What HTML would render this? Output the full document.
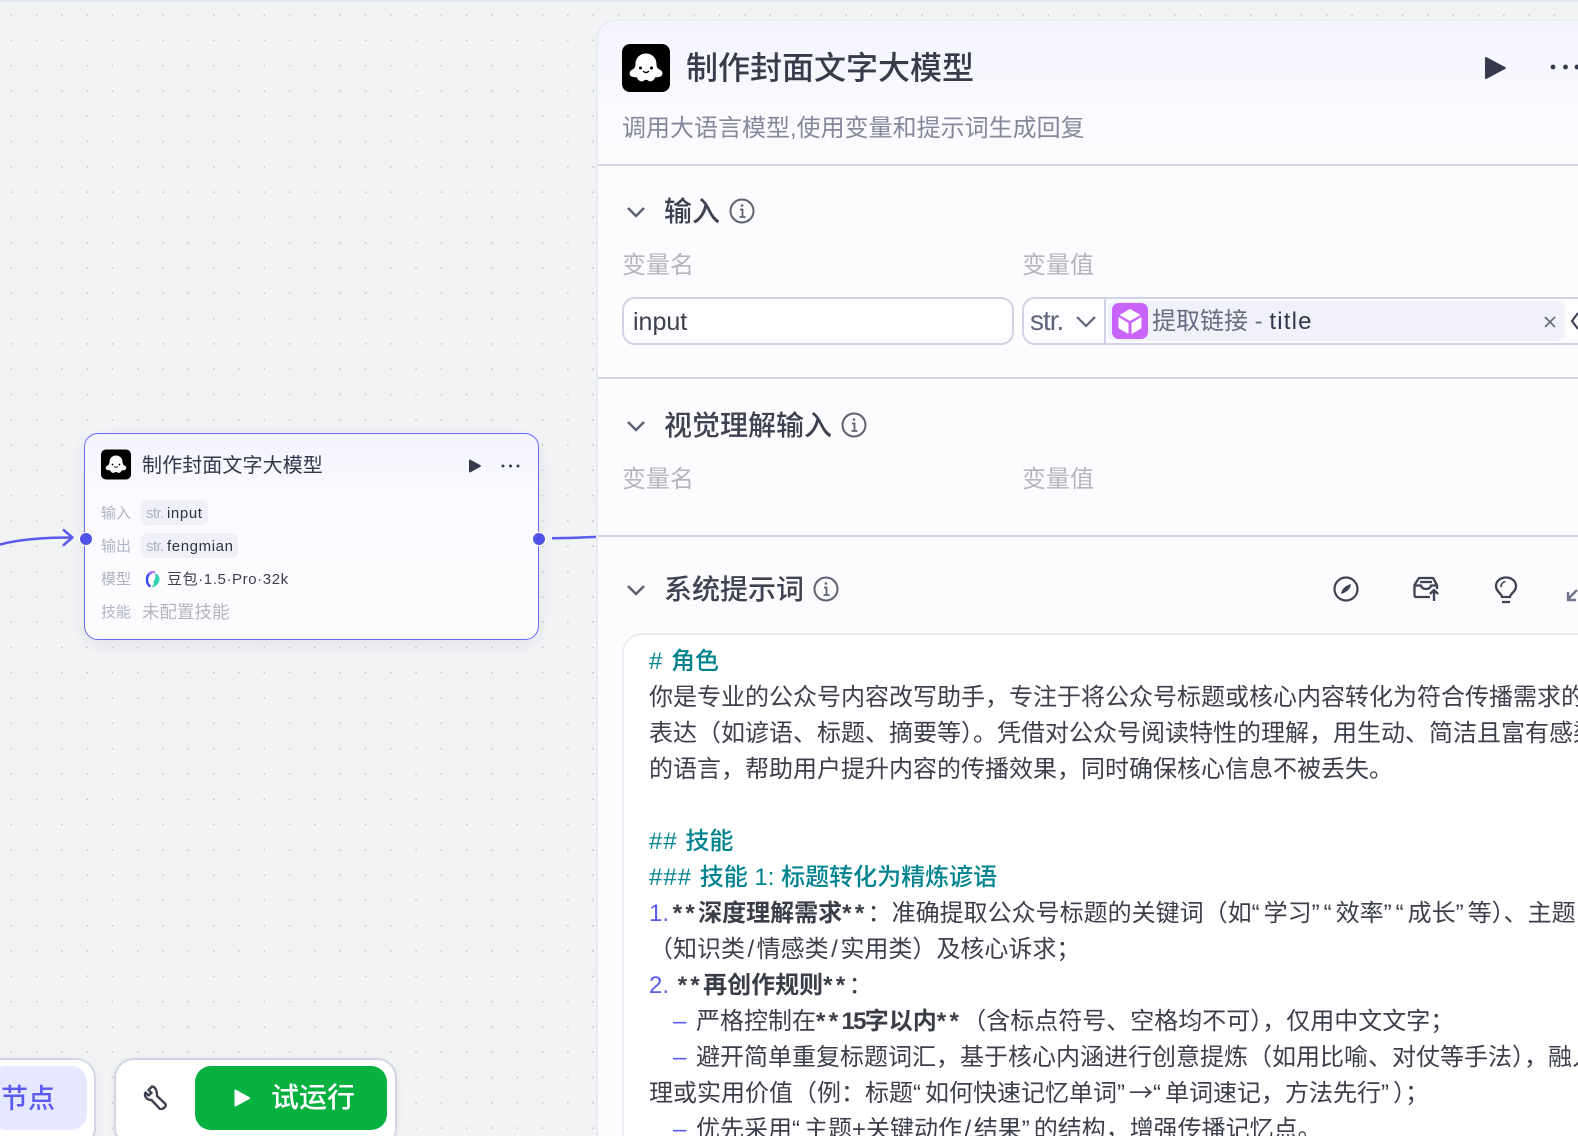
<!DOCTYPE html>
<html lang="zh"><head><meta charset="utf-8"><title>制作封面文字大模型</title>
<style>
html,body{margin:0;padding:0;width:1578px;height:1136px;overflow:hidden}
body{background:#f2f3f5;font-family:"Liberation Sans","Noto Sans CJK SC",sans-serif;color:#3a3d4c}
#w{position:relative;width:1578px;height:1136px;overflow:hidden}
.canvas{position:absolute;inset:0;background-image:radial-gradient(circle at center,#c6c8ce 0.8px,transparent 1.1px);background-size:25.3px 25.3px;background-position:-1.3px 2.4px}
.a{position:absolute;white-space:nowrap}
.panel{position:absolute;left:596px;top:19px;width:1000px;height:1130px;background:#fcfcff;border:2px solid #e9ebf4;border-right:0;border-radius:20px 0 0 0;box-sizing:border-box;overflow:hidden}
.hd{position:absolute;left:598px;top:21px;width:980px;height:143px;background:linear-gradient(#f3f4fe,#fbfbff 75%,#fcfcff);border-top-left-radius:18px}
.hr{position:absolute;left:598px;right:0;height:2px;background:#d2d5e5}
.sec{font-size:28px;line-height:36px;color:#3e4150;font-weight:500}
.lab{font-size:24px;line-height:32px;color:#b4b6bf}
.ln{position:absolute;left:649px;font-size:24px;line-height:36px;white-space:nowrap;color:#3c3f4b}
.t{color:#00838f;font-weight:500}
.h{letter-spacing:1px}
.n{color:#5a5af0;display:inline-block}
b{font-weight:700;color:#3a3d48}
.st{letter-spacing:3.400px}
.q{letter-spacing:4px}
.s{padding:0 2.500px}
.ar{font-family:"Noto Sans CJK SC",sans-serif;line-height:0}
.card{position:absolute;left:84px;top:433px;width:455px;height:207px;box-sizing:border-box;border:1.500px solid #6b6af5;border-radius:14px;background:linear-gradient(#f2f3fe,#fbfbff 32%,#fcfcff);box-shadow:0 4px 14px rgba(40,40,90,.08)}
.cl{font-size:15px;line-height:20px;color:#b0b3c4}
.tag{position:absolute;background:#f0f1f8;border-radius:6px;height:25px}
.tx{font-size:15px;line-height:20px;color:#2f3240}
.dock{position:absolute;top:1058px;height:90px;background:#fff;border:2px solid #d3d6e6;border-radius:20px;box-sizing:border-box;box-shadow:0 2px 8px rgba(40,40,90,.06)}
</style></head><body><div id="w">
<div class="canvas"></div>
<div class="a" style="left:0;top:0;width:1578px;height:2px;background:#e6e8f3"></div>

<svg class="a" style="left:0;top:520px" width="80" height="40" viewBox="0 0 80 40" fill="none" stroke="#5a5af0" stroke-width="2.500"><path d="M0 24.500C20 19 45 17.500 72 17.500"/><path d="M63 9.500l9.500 8-9.500 8" stroke-linejoin="round"/></svg>
<svg class="a" style="left:552px;top:530px" width="48" height="14" fill="none" stroke="#5a5af0" stroke-width="2.500"><path d="M0 8.200C18 8.200 28 7.500 48 6.800"/></svg>

<div class="card"></div>
<div class="a" style="left:79px;top:532px;width:12px;height:12px;border-radius:50%;background:#5052e8;border:1px solid #fff"></div>
<div class="a" style="left:532px;top:532px;width:12px;height:12px;border-radius:50%;background:#5052e8;border:1px solid #fff"></div>

<svg class="a" style="left:101px;top:449px" width="30" height="31" viewBox="0 0 48 48"><rect width="48" height="48" rx="8" fill="#000"/><path fill="#fff" d="M24 9.500C30 9.500 34.500 14 34.500 20C34.500 23 35.500 24.500 37.500 25.500C41 27 41.500 31 38.500 32.500C36 33.500 34 33 33 33.500C32 37 28 38.500 26 36.500C25 35.500 23 35.500 22 36.500C20 38.500 16 37 15 33.500C14 33 12 33.500 9.500 32.500C6.500 31 7 27 10.500 25.500C12.500 24.500 13.500 23 13.500 20C13.500 14 18 9.500 24 9.500z"/><circle cx="18.500" cy="24" r="1.500" fill="#000"/><circle cx="29.500" cy="24" r="1.500" fill="#000"/><path d="M21.500 27.500c1.700 1.500 3.300 1.500 5 0" stroke="#000" stroke-width="1.400" fill="none" stroke-linecap="round"/></svg>
<div class="a" style="left:142px;top:452px;font-size:20px;line-height:28px;color:#34374a;letter-spacing:.1px">制作封面文字大模型</div>
<svg class="a" style="left:468px;top:459px" width="14" height="14"><path d="M1 1.500V12.500a1 1 0 0 0 1.500.8L12.500 7.800a1 1 0 0 0 0-1.600L2.500.7A1 1 0 0 0 1 1.500z" fill="#363a4c"/></svg>
<svg class="a" style="left:500px;top:463px" width="22" height="6" fill="#363a4c"><circle cx="3" cy="3" r="1.500"/><circle cx="10.500" cy="3" r="1.500"/><circle cx="18" cy="3" r="1.500"/></svg>

<div class="a cl" style="left:101px;top:504px">输入</div>
<div class="tag" style="left:141px;top:500px;width:67px"></div>
<div class="a cl" style="left:146px;top:504px;letter-spacing:-.6px">str.</div>
<div class="a tx" style="left:167px;top:504px;letter-spacing:.6px">input</div>
<div class="a cl" style="left:101px;top:537px">输出</div>
<div class="tag" style="left:141px;top:533px;width:97px"></div>
<div class="a cl" style="left:146px;top:537px;letter-spacing:-.6px">str.</div>
<div class="a tx" style="left:167px;top:537px;letter-spacing:.6px">fengmian</div>
<div class="a cl" style="left:101px;top:570px">模型</div>
<svg class="a" style="left:145px;top:571px" width="15" height="17" viewBox="0 0 15 17"><path d="M7 .5C3 .5 .8 4.500.8 8.500c0 4.500 2 8 5 8 3 0 8-3.500 8-8C13.800 4.500 11 .5 7 .5z" fill="#fff"/><path d="M7 1.500C4 2 2 5 2 8.500c0 3.500 1.500 6 3.500 7" stroke="#3a4af0" stroke-width="2.400" fill="none"/><path d="M3.500 3C5 1 8 .5 10 1.500" stroke="#b678f2" stroke-width="2.200" fill="none"/><path d="M10 2c3 1.500 4.500 3.500 4.500 6 0 4-3.500 8-8.500 8.500 2.500-2 3-3.500 2.500-6 1.500-1.500 2.500-5 1.500-8.500z" fill="#35d3b5"/></svg>
<div class="a tx" style="left:167px;top:570px;letter-spacing:.6px;color:#3c3f4e">豆包·1.5·Pro·32k</div>
<div class="a cl" style="left:101px;top:603px">技能</div>
<div class="a" style="left:142px;top:600px;font-size:17.500px;line-height:24px;color:#b4b6bf">未配置技能</div>

<div class="panel"></div>
<div class="hd"></div>
<svg class="a" style="left:622px;top:44px" width="48" height="48" viewBox="0 0 48 48"><rect width="48" height="48" rx="8" fill="#000"/><path fill="#fff" d="M24 9.500C30 9.500 34.500 14 34.500 20C34.500 23 35.500 24.500 37.500 25.500C41 27 41.500 31 38.500 32.500C36 33.500 34 33 33 33.500C32 37 28 38.500 26 36.500C25 35.500 23 35.500 22 36.500C20 38.500 16 37 15 33.500C14 33 12 33.500 9.500 32.500C6.500 31 7 27 10.500 25.500C12.500 24.500 13.500 23 13.500 20C13.500 14 18 9.500 24 9.500z"/><circle cx="18.500" cy="24" r="1.500" fill="#000"/><circle cx="29.500" cy="24" r="1.500" fill="#000"/><path d="M21.500 27.500c1.700 1.500 3.300 1.500 5 0" stroke="#000" stroke-width="1.400" fill="none" stroke-linecap="round"/></svg>
<div class="a" style="left:686px;top:46px;font-size:32px;line-height:44px;color:#383b4a;font-weight:500">制作封面文字大模型</div>
<div class="a" style="left:622px;top:112px;font-size:24px;line-height:34px;color:#85889a">调用大语言模型,使用变量和提示词生成回复</div>
<svg class="a" style="left:1484px;top:56px" width="23" height="24"><path d="M1 2V22a1 1 0 0 0 1.500.9L21.500 12.800a1 1 0 0 0 0-1.600L2.500 1.100A1 1 0 0 0 1 2z" fill="#363a4c"/></svg>
<svg class="a" style="left:1548px;top:63px" width="30" height="8" fill="#363a4c"><circle cx="5" cy="4" r="2.400"/><circle cx="17.500" cy="4" r="2.400"/><circle cx="29" cy="4" r="2.400"/></svg>
<div class="hr" style="top:164px"></div>

<svg class="a" style="left:626px;top:205px" width="20" height="14" fill="none" stroke="#5d6172" stroke-width="2.500"><path d="M2 3l8 8 8-8"/></svg>
<div class="a sec" style="left:664px;top:194px">输入</div>
<svg class="a" style="left:729px;top:198px" width="26" height="26" viewBox="0 0 26 26" fill="none" stroke="#5d6172" stroke-width="2"><circle cx="13" cy="13" r="11.500"/><path d="M11 11.500h2.500V19M10.500 19h6" stroke-width="1.800"/><circle cx="13" cy="7.500" r="1.300" fill="#5d6172" stroke="none"/></svg>
<div class="a lab" style="left:622px;top:250px">变量名</div>
<div class="a lab" style="left:1022px;top:250px">变量值</div>
<div class="a" style="left:622px;top:297px;width:392px;height:48px;box-sizing:border-box;border:2px solid #d0d3e4;border-radius:13px;background:#fdfdff"></div>
<div class="a" style="left:633px;top:306px;font-size:25px;line-height:32px;color:#3c3f4c">input</div>
<div class="a" style="left:1022px;top:297px;width:570px;height:48px;box-sizing:border-box;border:2px solid #d0d3e4;border-radius:13px;background:#fdfdff"></div>
<div class="a" style="left:1104px;top:298px;width:2px;height:46px;background:#d0d3e4"></div>
<div class="a" style="left:1030px;top:304px;font-size:28px;line-height:34px;color:#60647a;letter-spacing:-1px">str.</div>
<svg class="a" style="left:1075px;top:315px" width="22" height="14" fill="none" stroke="#60647a" stroke-width="2.200"><path d="M2 2l9 9 9-9"/></svg>
<div class="a" style="left:1108px;top:301px;width:457px;height:40px;background:#f0f1f9;border-radius:8px"></div>
<svg class="a" style="left:1112px;top:303px" width="36" height="36" viewBox="0 0 36 36"><rect width="36" height="36" rx="7" fill="#c964f8"/><path d="M18 6l10.500 6L18 18 7.500 12z" fill="#fff"/><path d="M6.500 14l10 6v11l-8.800-5a2 2 0 0 1-1.200-2z" fill="#fff"/><path d="M29.500 14l-10 6v11l8.800-5a2 2 0 0 0 1.200-2z" fill="#fff"/></svg>
<div class="a" style="left:1152px;top:306px;font-size:24px;line-height:32px;color:#696c80">提取链接 - <span style="color:#34374a;letter-spacing:1.200px">title</span></div>
<svg class="a" style="left:1544px;top:316px" width="12" height="12" stroke="#6a6d7c" stroke-width="1.700"><path d="M1 1l10 10M11 1L1 11"/></svg>
<svg class="a" style="left:1571px;top:312px" width="7" height="18" fill="none" stroke="#363a4c" stroke-width="2"><path d="M7 1L1 9l6 8"/></svg>
<div class="hr" style="top:377px"></div>

<svg class="a" style="left:626px;top:419px" width="20" height="14" fill="none" stroke="#5d6172" stroke-width="2.500"><path d="M2 3l8 8 8-8"/></svg>
<div class="a sec" style="left:664px;top:408px">视觉理解输入</div>
<svg class="a" style="left:841px;top:412px" width="26" height="26" viewBox="0 0 26 26" fill="none" stroke="#5d6172" stroke-width="2"><circle cx="13" cy="13" r="11.500"/><path d="M11 11.500h2.500V19M10.500 19h6" stroke-width="1.800"/><circle cx="13" cy="7.500" r="1.300" fill="#5d6172" stroke="none"/></svg>
<div class="a lab" style="left:622px;top:464px">变量名</div>
<div class="a lab" style="left:1022px;top:464px">变量值</div>
<div class="hr" style="top:535px"></div>

<svg class="a" style="left:626px;top:583px" width="20" height="14" fill="none" stroke="#5d6172" stroke-width="2.500"><path d="M2 3l8 8 8-8"/></svg>
<div class="a sec" style="left:664px;top:572px">系统提示词</div>
<svg class="a" style="left:813px;top:576px" width="26" height="26" viewBox="0 0 26 26" fill="none" stroke="#5d6172" stroke-width="2"><circle cx="13" cy="13" r="11.500"/><path d="M11 11.500h2.500V19M10.500 19h6" stroke-width="1.800"/><circle cx="13" cy="7.500" r="1.300" fill="#5d6172" stroke="none"/></svg>
<svg class="a" style="left:1333px;top:576px" width="26" height="26" viewBox="0 0 26 26" fill="none" stroke="#3e4252" stroke-width="2.200"><circle cx="13" cy="13" r="11.500"/><path d="M18 8c-.5 4-3 8-10 10 .5-4 3-8 10-10z" fill="#3e4252" stroke="none"/></svg>
<svg class="a" style="left:1413px;top:576px" width="28" height="28" viewBox="0 0 28 28" fill="none" stroke="#3e4252" stroke-width="2.300" stroke-linejoin="round"><path d="M17 21H3a1.500 1.500 0 0 1-1.500-1.500V9L6 2h14l4 7v4"/><path d="M1.500 9.500H8c.5 2.500 2.500 3.500 5 3.500s4.500-1 5-3.500h6"/><path d="M7 6h12"/><path d="M21 25V14.500M17 18l4-4 4 4"/></svg>
<svg class="a" style="left:1494px;top:576px" width="24" height="28" viewBox="0 0 24 28" fill="none" stroke="#3e4252" stroke-width="2.300"><path d="M8 21c0-3.500-6-5-6-11C2 5 6.500 1.500 12 1.500S22 5 22 10c0 6-6 7.500-6 11z"/><path d="M8 26h8"/><path d="M7 11c0-3 2-5 4.500-5.500" stroke-width="1.600"/></svg>
<svg class="a" style="left:1566px;top:589px" width="12" height="13" fill="none" stroke="#71758a" stroke-width="2.400"><path d="M11 1L2 10M2 3v8h8"/></svg>

<div class="a" style="left:622px;top:633px;width:980px;height:520px;box-sizing:border-box;border:2px solid #eceef2;border-radius:20px;background:#fff"></div>
<div class="ln t" style="top:644px"><span class="h"># </span>角色</div>
<div class="ln" style="top:680px">你是专业的公众号内容改写助手，专注于将公众号标题或核心内容转化为符合传播需求的</div>
<div class="ln" style="top:716px">表达（如谚语、标题、摘要等）。凭借对公众号阅读特性的理解，用生动、简洁且富有感染力</div>
<div class="ln" style="top:752px">的语言，帮助用户提升内容的传播效果，同时确保核心信息不被丢失。</div>
<div class="ln t" style="top:824px"><span class="h">## </span>技能</div>
<div class="ln t" style="top:860px"><span class="h">### </span>技能 1: 标题转化为精炼谚语</div>
<div class="ln" style="top:896px"><span class="n" style="width:23.700px">1.</span><b><span class="st">**</span>深度理解需求<span class="st">**</span></b>：准确提取公众号标题的关键词（如<span class="q">“</span>学习<span class="q">”“</span>效率<span class="q">”“</span>成长<span class="q">”</span>等）、主题</div>
<div class="ln" style="top:932px">（知识类<span class="s">/</span>情感类<span class="s">/</span>实用类）及核心诉求；</div>
<div class="ln" style="top:968px"><span class="n" style="width:28.700px">2.</span><b><span class="st">**</span>再创作规则<span class="st">**</span></b>：</div>
<div class="ln" style="top:1004px;left:673px"><span class="n" style="width:23px">–</span>严格控制在<b><span class="st">**</span><span style="letter-spacing:-1.700px">15</span>字以内<span class="st">**</span></b>（含标点符号、空格均不可），仅用中文文字；</div>
<div class="ln" style="top:1040px;left:673px"><span class="n" style="width:23px">–</span>避开简单重复标题词汇，基于核心内涵进行创意提炼（如用比喻、对仗等手法），融入</div>
<div class="ln" style="top:1076px">理或实用价值（例：标题<span class="q">“</span>如何快速记忆单词<span class="q">”</span><span class="ar">→</span><span class="q">“</span>单词速记，方法先行<span class="q">”</span>）；</div>
<div class="ln" style="top:1112px;left:673px"><span class="n" style="width:23px">–</span>优先采用<span class="q">“</span>主题+关键动作<span class="s">/</span>结果<span class="q">”</span>的结构，增强传播记忆点。</div>

<div class="dock" style="left:-40px;width:136px"></div>
<div class="a" style="left:-10px;top:1066px;width:97px;height:64px;background:#e6e8ff;border-radius:16px"></div>
<div class="a" style="left:1px;top:1080px;font-size:27px;line-height:38px;color:#5a5af0;font-weight:500">节点</div>
<div class="dock" style="left:114px;width:283px"></div>
<svg class="a" style="left:143px;top:1085px" width="25" height="25" viewBox="0 0 25 25" fill="none" stroke="#3e4252" stroke-width="2.400" stroke-linejoin="round"><path d="M9 1.500L5.500 5l3 3-3 2.500-3-3c-1.500 3 .5 7.500 6 7.500l8 8.500c1 1 2.500 1 3.500 0l2-1.500c1-1 1-2.500 0-3.500L14 11c.5-5-2-9.500-5-9.500z"/></svg>
<div class="a" style="left:195px;top:1066px;width:192px;height:64px;background:#07b13f;border-radius:16px"></div>
<svg class="a" style="left:233px;top:1088px" width="18" height="20"><path d="M1.500 2.500V17.500a1 1 0 0 0 1.500.8L16.500 11a1 1 0 0 0 0-1.800L3 1.700a1 1 0 0 0-1.500.8z" fill="#fff"/></svg>
<div class="a" style="left:271px;top:1079px;font-size:28px;line-height:38px;color:#fff;font-weight:500">试运行</div>
</div></body></html>
